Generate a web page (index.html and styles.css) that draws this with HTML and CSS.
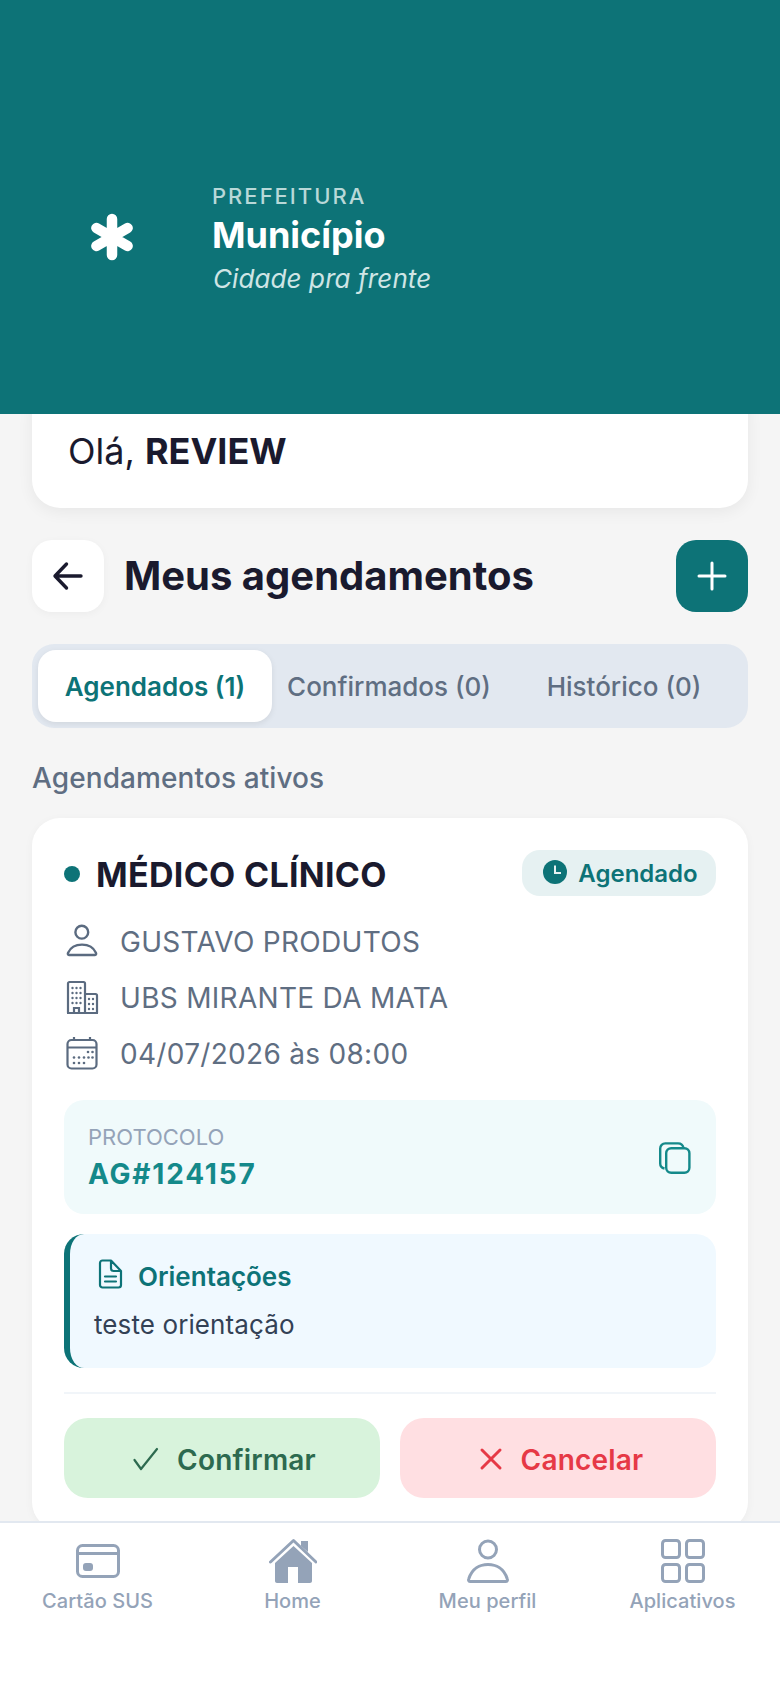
FILE: index.html
```html
<!DOCTYPE html>
<html lang="pt-BR">
<head>
<meta charset="utf-8">
<title>Meus agendamentos</title>
<link rel="stylesheet" href="styles.css">
</head>
<body>
<div class="app">
  <header class="hero">
    <div class="logo">
      <svg class="logo-svg" viewBox="0 0 96 96" fill="none" stroke="#fff" stroke-width="10.5" stroke-linecap="round">
        <path d="M48 27V63M32.4 36L63.6 54M32.4 54L63.6 36"/>
      </svg>
    </div>
    <div class="hero-text">
      <div class="hero-kicker">PREFEITURA</div>
      <div class="hero-name">Município</div>
      <div class="hero-motto">Cidade pra frente</div>
    </div>
  </header>

  <main class="content">
    <section class="greeting">Olá, <strong>REVIEW</strong></section>

    <div class="title-row">
      <button class="square-btn back-btn" aria-label="Voltar">
        <svg width="36" height="36" viewBox="0 0 36 36" fill="none" stroke="#1a1a2e" stroke-width="3.4" stroke-linecap="round" stroke-linejoin="round"><path d="M31 18H6M16.5 6L5 18L16.5 30"/></svg>
      </button>
      <h1 class="page-title">Meus agendamentos</h1>
      <button class="square-btn add-btn" aria-label="Adicionar">
        <svg width="36" height="36" viewBox="0 0 36 36" fill="none" stroke="#fff" stroke-width="3" stroke-linecap="round"><path d="M18 5V31M5 18H31"/></svg>
      </button>
    </div>

    <div class="tabs">
      <div class="tab tab-active">Agendados (1)</div>
      <div class="tab tab-mid">Confirmados (0)</div>
      <div class="tab tab-last">Histórico (0)</div>
    </div>

    <div class="section-label">Agendamentos ativos</div>

    <article class="card">
      <div class="card-head">
        <div class="card-title"><span class="dot"></span>MÉDICO CLÍNICO</div>
        <div class="badge">
          <svg class="badge-icon" width="24" height="24" viewBox="0 0 24 24"><circle cx="12" cy="12" r="12" fill="#0d7377"/><path d="M12 5.5V13H18" fill="none" stroke="#e6f1f2" stroke-width="2"/></svg>
          <span>Agendado</span>
        </div>
      </div>

      <div class="info-list">
        <div class="info-row">
          <svg class="info-icon" viewBox="0 0 36 36" fill="none" stroke="#5b6b80" stroke-width="2.4"><circle cx="17.8" cy="8.2" r="6.4"/><path d="M5 31C3.8 31 3.6 29.8 4.1 28.7C6.5 23.4 12 20.6 18 20.6C24 20.6 29.5 23.4 31.9 28.7C32.4 29.8 32.2 31 31 31Z"/></svg>
          <span>GUSTAVO PRODUTOS</span>
        </div>
        <div class="info-row">
          <svg class="info-icon" viewBox="0 0 36 36" fill="none" stroke="#5b6b80" stroke-width="2.2"><path d="M4 33V3.5C4 2.7 4.7 2 5.5 2H19.5C20.3 2 21 2.7 21 3.5V33M21 14H31.5C32.3 14 33 14.7 33 15.5V33M3 33H34M10 33V28H15V33"/><g fill="#5b6b80" stroke="none"><circle cx="8.5" cy="8" r="1.2"/><circle cx="12.5" cy="8" r="1.2"/><circle cx="16.5" cy="8" r="1.2"/><circle cx="8.5" cy="13" r="1.2"/><circle cx="12.5" cy="13" r="1.2"/><circle cx="16.5" cy="13" r="1.2"/><circle cx="8.5" cy="18" r="1.2"/><circle cx="12.5" cy="18" r="1.2"/><circle cx="16.5" cy="18" r="1.2"/><circle cx="8.5" cy="23" r="1.2"/><circle cx="12.5" cy="23" r="1.2"/><circle cx="16.5" cy="23" r="1.2"/><circle cx="25" cy="19" r="1.2"/><circle cx="29" cy="19" r="1.2"/><circle cx="25" cy="24" r="1.2"/><circle cx="29" cy="24" r="1.2"/><circle cx="25" cy="29" r="1.2"/><circle cx="29" cy="29" r="1.2"/></g></svg>
          <span>UBS MIRANTE DA MATA</span>
        </div>
        <div class="info-row">
          <svg class="info-icon" viewBox="0 0 36 36" fill="none" stroke="#5b6b80" stroke-width="2.2"><rect x="3.5" y="4" width="29" height="28.5" rx="4"/><path d="M3.5 11.5H32.5M10 1V4M26 1V4"/><g fill="#5b6b80" stroke="none"><circle cx="24" cy="16" r="1.3"/><circle cx="28.5" cy="16" r="1.3"/><circle cx="10" cy="21.5" r="1.3"/><circle cx="15" cy="21.5" r="1.3"/><circle cx="20" cy="21.5" r="1.3"/><circle cx="24.5" cy="21.5" r="1.3"/><circle cx="28.5" cy="21.5" r="1.3"/><circle cx="10" cy="27" r="1.3"/><circle cx="15" cy="27" r="1.3"/><circle cx="20" cy="27" r="1.3"/></g></svg>
          <span>04/07/2026 às 08:00</span>
        </div>
      </div>

      <div class="protocol">
        <div>
          <div class="protocol-label">PROTOCOLO</div>
          <div class="protocol-code">AG#124157</div>
        </div>
        <svg class="copy-icon" width="36" height="36" viewBox="0 0 36 36" fill="none" stroke="#14898a" stroke-width="2.4"><path d="M6.5 27.5C4 27 2.2 25.3 2.2 22.5V7.5C2.2 4.6 4.4 2.4 7.3 2.4H20C23 2.4 25 4.2 25.5 7"/><rect x="8.2" y="7.2" width="23.2" height="24.6" rx="5"/></svg>
      </div>

      <div class="notes">
        <div class="notes-head">
          <svg width="28" height="32" viewBox="0 0 28 32" fill="none" stroke="#0d7377" stroke-width="2.2" stroke-linejoin="round" stroke-linecap="round"><path d="M6.5 2.5H15L25 13V27C25 28.4 23.9 29.5 22.5 29.5H6.5C5.1 29.5 4 28.4 4 27V5C4 3.6 5.1 2.5 6.5 2.5ZM15 2.5V10.5C15 12 16 13 17.5 13H25M9 18.5H20M9 23.5H20"/></svg>
          <span class="notes-title">Orientações</span>
        </div>
        <div class="notes-text">teste orientação</div>
      </div>

      <div class="divider"></div>

      <div class="actions">
        <button class="action action-ok">
          <svg width="28" height="28" viewBox="0 0 28 28" fill="none" stroke="#2d6a4f" stroke-width="2.2" stroke-linecap="round" stroke-linejoin="round"><path d="M3.5 15L10 24L26 4"/></svg>
          Confirmar
        </button>
        <button class="action action-no">
          <svg width="24" height="24" viewBox="0 0 24 24" fill="none" stroke="#e63946" stroke-width="3" stroke-linecap="round"><path d="M3 3L21 21M21 3L3 21"/></svg>
          Cancelar
        </button>
      </div>
    </article>
  </main>

  <nav class="nav">
    <div class="nav-item">
      <svg class="nav-icon" viewBox="0 0 48 48" fill="none" stroke="#94a3b8" stroke-width="3"><rect x="3.5" y="8.5" width="41" height="31" rx="5"/><path d="M3.5 16.5H44.5"/><rect x="9" y="26" width="10" height="8" rx="3" fill="#94a3b8" stroke="none"/></svg>
      <span>Cartão SUS</span>
    </div>
    <div class="nav-item">
      <svg class="nav-icon" viewBox="0 0 48 48" fill="#94a3b8"><path d="M1.5 25L24.5 3.5L47 25" fill="none" stroke="#94a3b8" stroke-width="3" stroke-linecap="round" stroke-linejoin="round"/><path d="M32 4H39V15L32 9Z"/><path d="M6 26L24.5 9L43 26V44C43 45.1 42.1 46 41 46H29V30H19V46H8C6.9 46 6 45.1 6 44Z"/></svg>
      <span>Home</span>
    </div>
    <div class="nav-item">
      <svg class="nav-icon" viewBox="0 0 48 48" fill="none" stroke="#94a3b8" stroke-width="3"><circle cx="24" cy="12.5" r="8.5"/><path d="M6 44.5C4.5 44.5 4.2 43 4.8 41.8C8 31.5 16 27.5 24 27.5C32 27.5 40 31.5 43.2 41.8C43.8 43 43.5 44.5 42 44.5Z"/></svg>
      <span>Meu perfil</span>
    </div>
    <div class="nav-item">
      <svg class="nav-icon" viewBox="0 0 48 48" fill="none" stroke="#94a3b8" stroke-width="3"><rect x="3.5" y="3.5" width="17" height="17" rx="3"/><rect x="27.5" y="3.5" width="17" height="17" rx="3"/><rect x="3.5" y="27.5" width="17" height="17" rx="3"/><rect x="27.5" y="27.5" width="17" height="17" rx="3"/></svg>
      <span>Aplicativos</span>
    </div>
  </nav>
</div>
</body>
</html>
```

FILE: styles.css
```css
* { box-sizing: border-box; }
html, body { margin: 0; padding: 0; }
body { font-family: Inter, "Liberation Sans", sans-serif; background: #f5f5f5; color: #1a1a2e; }
button { font-family: inherit; border: 0; padding: 0; }
.app { width: 780px; height: 1688px; display: flex; flex-direction: column; overflow: hidden; }

.hero { height: 414px; flex: none; background: #0d7377; display: flex; align-items: center; padding: 66px 0 0 64px; gap: 52px; position: relative; z-index: 2; }
.logo { width: 96px; height: 96px; flex: none; }
.logo-svg { width: 96px; height: 96px; display: block; }
.hero-text { display: flex; flex-direction: column; }
.hero-kicker { font-size: 22px; line-height: 28px; letter-spacing: 2px; color: #b8d8d8; font-weight: 500; }
.hero-name { font-size: 36px; line-height: 50px; font-weight: 700; color: #fff; }
.hero-motto { font-size: 26px; line-height: 38px; font-style: italic; color: #cfe5e5; letter-spacing: .1px; padding-left: 1px; }

.content { flex: 1; min-height: 0; padding: 0 32px; overflow: hidden; }
.greeting { margin-top: -30px; height: 124px; padding: 45px 36px 0; background: #fff; border-radius: 28px; box-shadow: 0 4px 16px rgba(0,0,0,.06); font-size: 36px; line-height: 44px; }
.greeting strong { font-weight: 700; }

.title-row { display: flex; align-items: center; margin-top: 32px; }
.square-btn { width: 72px; height: 72px; border-radius: 20px; display: flex; align-items: center; justify-content: center; flex: none; }
.back-btn { background: #fff; box-shadow: 0 2px 8px rgba(0,0,0,.04); }
.add-btn { background: #0d7377; }
.page-title { flex: 1; margin: 0 0 0 20px; font-size: 40px; line-height: 56px; font-weight: 700; color: #1a1a2e; }

.tabs { margin-top: 32px; height: 84px; background: #e2e8f0; border-radius: 22px; padding: 6px; display: flex; }
.tab { height: 72px; display: flex; align-items: center; justify-content: center; font-size: 26px; font-weight: 500; color: #5f6e82; border-radius: 18px; }
.tab-active { width: 234px; background: #fff; color: #0d7377; font-weight: 600; box-shadow: 0 2px 6px rgba(0,0,0,.08); }
.tab-mid { width: 234px; }
.tab-last { width: 236px; }

.section-label { margin-top: 33px; font-size: 28px; line-height: 34px; font-weight: 500; color: #5f6e82; letter-spacing: .1px; }

.card { margin-top: 23px; background: #fff; border-radius: 28px; padding: 32px; box-shadow: 0 2px 10px rgba(0,0,0,.04); }
.card-head { display: flex; justify-content: space-between; align-items: center; height: 46px; }
.card-title { display: flex; align-items: center; gap: 16px; padding-top: 2px; font-size: 34px; letter-spacing: .3px; font-weight: 700; color: #1a1a2e; }
.dot { width: 16px; height: 16px; border-radius: 50%; background: #0d7377; }
.badge { height: 46px; width: 194px; padding-left: 3px; background: #e6f1f2; border-radius: 18px; display: flex; align-items: center; justify-content: center; gap: 11px; font-size: 24px; font-weight: 600; color: #0d7377; }
.badge-icon { margin-bottom: 3px; }

.info-list { margin-top: 28px; display: flex; flex-direction: column; gap: 20px; }
.info-row { display: flex; align-items: center; gap: 20px; height: 36px; font-size: 28px; color: #5f6e82; letter-spacing: .3px; }
.info-icon { width: 36px; height: 36px; flex: none; }

.protocol { margin-top: 28px; height: 114px; background: #f0fafb; border-radius: 20px; padding: 0 22px 0 24px; display: flex; align-items: center; justify-content: space-between; }
.protocol-label { font-size: 22px; line-height: 30px; color: #94a3b8; }
.protocol-code { margin-top: 4px; font-size: 28px; line-height: 36px; font-weight: 700; color: #14898a; letter-spacing: 1.8px; }
.copy-icon { margin-top: 4px; }

.notes { margin-top: 20px; height: 134px; background: #f0f9ff; border-left: 6px solid #0d7377; border-radius: 20px; padding: 24px 24px 0; }
.notes-head { display: flex; align-items: center; gap: 14px; height: 32px; margin-left: 2px; font-size: 26px; line-height: 32px; font-weight: 600; color: #0d7377; }
.notes-title { margin-top: 6px; }
.notes-text { margin-top: 18px; font-size: 26px; line-height: 34px; letter-spacing: .1px; color: #334155; }

.divider { margin-top: 24px; height: 2px; background: #f1f5f9; }

.actions { margin-top: 24px; display: grid; grid-template-columns: 1fr 1fr; gap: 20px; }
.action { height: 80px; border-radius: 24px; padding: 4px 0 0 3px; display: flex; align-items: center; justify-content: center; gap: 18px; font-size: 28px; letter-spacing: .2px; font-weight: 600; }
.action svg { margin-top: -2px; }
.action-ok { background: #d8f3dc; color: #2d6a4f; }
.action-no { background: #ffdfe2; color: #e63946; padding-left: 6px; }

.nav { height: 167px; flex: none; background: #fff; border-top: 2px solid #e2e8f0; display: grid; grid-template-columns: repeat(4, 1fr); position: relative; z-index: 2; }
.nav-item { display: flex; flex-direction: column; align-items: center; padding-top: 14px; font-size: 20px; line-height: 32px; letter-spacing: .05px; font-weight: 500; color: #94a3b8; }
.nav-icon { width: 48px; height: 48px; flex: none; }
```
